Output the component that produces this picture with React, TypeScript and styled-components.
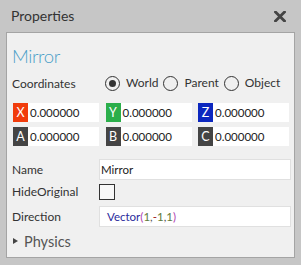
import React from "react";
import styled, { createGlobalStyle } from "styled-components";

const Global = createGlobalStyle`
  html, body { margin: 0; padding: 0; background: #c6c6c6; }
  body { font-family: Lato, "Open Sans", sans-serif; }
`;

const Window = styled.div`
  width: 301px;
  height: 265px;
  background: #c6c6c6;
  display: flex;
  flex-direction: column;
  box-sizing: border-box;
`;

const TitleBar = styled.div`
  height: 32px;
  display: flex;
  align-items: center;
  justify-content: space-between;
  padding: 0 15px 0 11px;
  box-sizing: border-box;
`;

const Title = styled.span`
  font-size: 14px;
  line-height: 18px;
  color: #333;
`;

const Panel = styled.div`
  margin-left: 6px;
  width: 289px;
  height: 226px;
  background: #f0f0f0;
  border: 1px solid #a4a4a4;
  box-sizing: border-box;
  padding: 0 0 0 5px;
  display: flex;
  flex-direction: column;
`;

const Heading = styled.div`
  height: 36px;
  padding-top: 12px;
  box-sizing: border-box;
  font-size: 18.5px;
  font-weight: 300;
  line-height: 22px;
  letter-spacing: -0.4px;
  color: #4c9fc8;
`;

const Label = styled.span`
  font-size: 12px;
  line-height: 15px;
  color: #333;
`;

const CoordRow = styled.div`
  height: 28px;
  display: flex;
  align-items: center;
`;

const LabelCol = styled.div<{ $w: number }>`
  width: ${(p) => p.$w}px;
  flex: none;
  display: flex;
  align-items: center;
`;

const RadioGroup = styled.div`
  display: flex;
  align-items: center;
`;

const RadioItem = styled.div`
  display: flex;
  align-items: center;
  gap: 6px;
  margin-right: 5px;
`;

const RadioCircle = styled.span<{ $on?: boolean }>`
  width: 15px;
  height: 15px;
  border: 1.5px solid #333;
  border-radius: 50%;
  box-sizing: border-box;
  display: flex;
  align-items: center;
  justify-content: center;
  &::after {
    content: "";
    width: 7px;
    height: 7px;
    border-radius: 50%;
    background: ${(p) => (p.$on ? "#333" : "transparent")};
  }
`;

const RadioText = styled.span`
  font-size: 12px;
  line-height: 16px;
  color: #333;
`;

const FieldGrid = styled.div`
  margin-top: 6px;
  padding-left: 1px;
  display: grid;
  grid-template-columns: 86px 86px 91px;
  column-gap: 6.5px;
  row-gap: 5px;
`;

const Field = styled.div`
  height: 19px;
  background: #fff;
  display: flex;
  align-items: center;
`;

const Tag = styled.span<{ $color: string }>`
  width: 15px;
  height: 19px;
  background: ${(p) => p.$color};
  color: #fff;
  font-size: 12.5px;
  line-height: 19px;
  display: flex;
  align-items: center;
  justify-content: center;
  flex: none;
`;

const Value = styled.span`
  font-size: 11.5px;
  line-height: 15px;
  color: #222;
  margin-left: 2px;
`;

const PropRow = styled.div<{ $mt: number; $h: number }>`
  margin-top: ${(p) => p.$mt}px;
  height: ${(p) => p.$h}px;
  display: flex;
  align-items: center;
`;

const TextBox = styled.div<{ $indent: number }>`
  width: 192px;
  height: 21px;
  background: #fff;
  border: 1px solid #e0e0e0;
  box-sizing: border-box;
  display: flex;
  align-items: center;
  padding-left: ${(p) => p.$indent}px;
  font-size: 11.5px;
  line-height: 15px;
  color: #222;
`;

const Check = styled.span`
  width: 16px;
  height: 16px;
  border: 1px solid #333;
  box-sizing: border-box;
  background: #f8f8f8;
`;

const Tok = styled.span<{ $c: string }>`
  color: ${(p) => p.$c};
`;

const Section = styled.div`
  margin-top: 4px;
  height: 20px;
  display: flex;
  align-items: center;
  padding-left: 1px;
  gap: 6px;
`;

const Arrow = styled.span`
  width: 0;
  height: 0;
  border-top: 3.5px solid transparent;
  border-bottom: 3.5px solid transparent;
  border-left: 5px solid #444;
`;

const SectionText = styled.span`
  font-size: 14.5px;
  line-height: 19px;
  color: #555;
`;

const CloseIcon = () => (
  <svg width="12" height="11" viewBox="0 0 12 11">
    <path d="M1.5 1 L10.5 10 M10.5 1 L1.5 10" stroke="#444" strokeWidth="2.8" strokeLinecap="square" />
  </svg>
);

const fields = [
  { t: "X", c: "#f13c0c" },
  { t: "Y", c: "#2bae4a" },
  { t: "Z", c: "#0c27bf" },
  { t: "A", c: "#444" },
  { t: "B", c: "#444" },
  { t: "C", c: "#444" },
];

export default function App() {
  return (
    <Window>
      <Global />
      <TitleBar>
        <Title>Properties</Title>
        <CloseIcon />
      </TitleBar>
      <Panel>
        <Heading>Mirror</Heading>
        <CoordRow>
          <LabelCol $w={93}>
            <Label>Coordinates</Label>
          </LabelCol>
          <RadioGroup>
            <RadioItem>
              <RadioCircle $on />
              <RadioText>World</RadioText>
            </RadioItem>
            <RadioItem>
              <RadioCircle />
              <RadioText>Parent</RadioText>
            </RadioItem>
            <RadioItem>
              <RadioCircle />
              <RadioText>Object</RadioText>
            </RadioItem>
          </RadioGroup>
        </CoordRow>
        <FieldGrid>
          {fields.map((f) => (
            <Field key={f.t}>
              <Tag $color={f.c}>{f.t}</Tag>
              <Value>0.000000</Value>
            </Field>
          ))}
        </FieldGrid>
        <PropRow $mt={13} $h={21}>
          <LabelCol $w={87}>
            <Label>Name</Label>
          </LabelCol>
          <TextBox $indent={1}>Mirror</TextBox>
        </PropRow>
        <PropRow $mt={3} $h={17}>
          <LabelCol $w={87}>
            <Label>HideOriginal</Label>
          </LabelCol>
          <Check />
        </PropRow>
        <PropRow $mt={6} $h={21}>
          <LabelCol $w={87}>
            <Label>Direction</Label>
          </LabelCol>
          <TextBox $indent={7}>
            <Tok $c="#2b2b9c">Vector</Tok>
            <Tok $c="#b03cb0">(</Tok>
            <Tok $c="#5f7a3a">1</Tok>
            <Tok $c="#555">,</Tok>
            <Tok $c="#a02020">-</Tok>
            <Tok $c="#5f7a3a">1</Tok>
            <Tok $c="#555">,</Tok>
            <Tok $c="#5f7a3a">1</Tok>
            <Tok $c="#b03cb0">)</Tok>
          </TextBox>
        </PropRow>
        <Section>
          <Arrow />
          <SectionText>Physics</SectionText>
        </Section>
      </Panel>
    </Window>
  );
}
